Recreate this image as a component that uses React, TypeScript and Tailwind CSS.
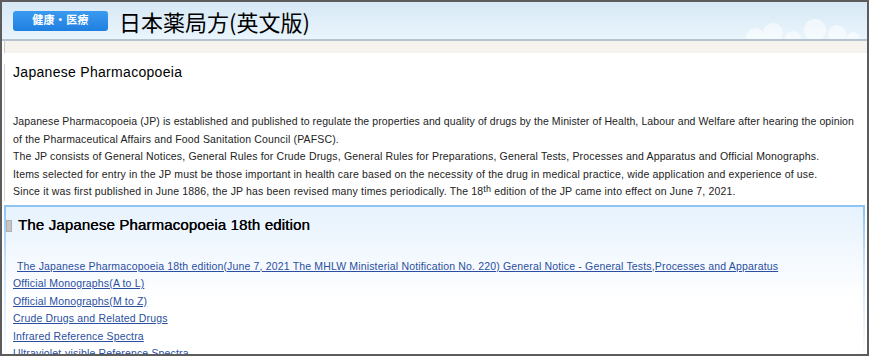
export default function App() {
  const links = [
    "Official Monographs(A to  L)",
    "Official Monographs(M to Z)",
    "Crude Drugs and Related Drugs",
    "Infrared Reference Spectra",
    "Ultraviolet-visible Reference Spectra",
  ];

  return (
    <div className="w-[869px] h-[356px] overflow-hidden border-2 border-[#5c5c5c] bg-white font-['Liberation_Sans','Noto_Sans_CJK_JP',sans-serif] text-[#222]">
      {/* Header */}
      <div className="relative h-[37px] bg-gradient-to-b from-[#d6e8f5] to-[#eaf5fc] flex items-center pl-[11px]">
        <span className="h-[20px] w-[95px] rounded-[3px] bg-gradient-to-b from-[#3a9af0] to-[#1f7fe0] text-white text-[11px] font-bold flex items-center justify-center tracking-wide">
          健康・医療
        </span>
        <h1 className="ml-[11px] text-[22px] leading-none text-black font-['Noto_Sans_CJK_JP',sans-serif]">
          日本薬局方(英文版)
        </h1>
        <svg className="absolute right-[2px] bottom-0" width="130" height="20" viewBox="0 0 130 20">
          <g fill="#ffffff" opacity="0.55">
            <circle cx="20" cy="18" r="9" />
            <circle cx="38" cy="14" r="10" />
            <circle cx="58" cy="20" r="8" />
            <circle cx="80" cy="11" r="11" />
            <circle cx="102" cy="15" r="9" />
            <circle cx="118" cy="20" r="7" />
          </g>
        </svg>
      </div>
      <div className="h-[2px] bg-[#b7c2d1]" />
      <div className="h-[12px] bg-[#f6f3ee] border-l border-[#c9c9c9] ml-[2px]" />

      {/* Intro */}
      <div className="ml-[2px] border-l border-[#d6d6d6] pl-[8px]">
        <h2 className="mt-[11px] text-[14px] leading-[16px] text-black tracking-[0.3px]">Japanese Pharmacopoeia</h2>
        <div className="mt-[33px] text-[10.5px] leading-[17.5px] text-[#222] tracking-[0.16px]">
          <p>
            <span className="whitespace-nowrap tracking-[0.1px]">
              Japanese Pharmacopoeia (JP) is established and published to regulate the properties and quality of drugs by the Minister of Health, Labour and Welfare after hearing the opinion
            </span>
            <br />
            of the Pharmaceutical Affairs and Food Sanitation Council (PAFSC).
          </p>
          <p>The JP consists of General Notices, General Rules for Crude Drugs, General Rules for Preparations, General Tests, Processes and Apparatus and Official Monographs.</p>
          <p>Items selected for entry in the JP must be those important in health care based on the necessity of the drug in medical practice, wide application and experience of use.</p>
          <p>
            Since it was first published in June 1886, the JP has been revised many times periodically. The 18<sup className="text-[9px] top-[-3px]">th</sup> edition of the JP came into effect on June 7, 2021.
          </p>
        </div>
      </div>

      {/* Section */}
      <div className="mt-[4px] ml-[2px] mr-[2px] bg-gradient-to-b from-[#8ec3f2] via-[#cfe5fa] via-40% to-white pt-[2px] px-[2px]">
        <div className="bg-gradient-to-b from-[#e6f2fd] via-white via-60% to-white">
          <div className="flex items-center h-[36px] pt-[2px]">
            <span className="w-[6px] h-[12px] bg-[#c4c4c4] border border-[#b0b0b0] mr-[6px]" />
            <h2 className="text-[15px] text-black tracking-[0.15px] [text-shadow:0.3px_0_0_#000]">The Japanese Pharmacopoeia 18th edition</h2>
          </div>
          <div className="pl-[7px] pt-[15px] flex flex-col text-[10.5px] leading-[17.5px] text-[#2a4fa0] tracking-[0.16px]">
            <a className="underline pl-[4px]" href="#">
              The Japanese Pharmacopoeia 18th edition(June 7, 2021 The MHLW Ministerial  Notification No. 220) General Notice - General Tests,Processes and Apparatus
            </a>
            {links.map((l) => (
              <a key={l} className="underline" href="#">
                {l}
              </a>
            ))}
          </div>
        </div>
      </div>
    </div>
  );
}
